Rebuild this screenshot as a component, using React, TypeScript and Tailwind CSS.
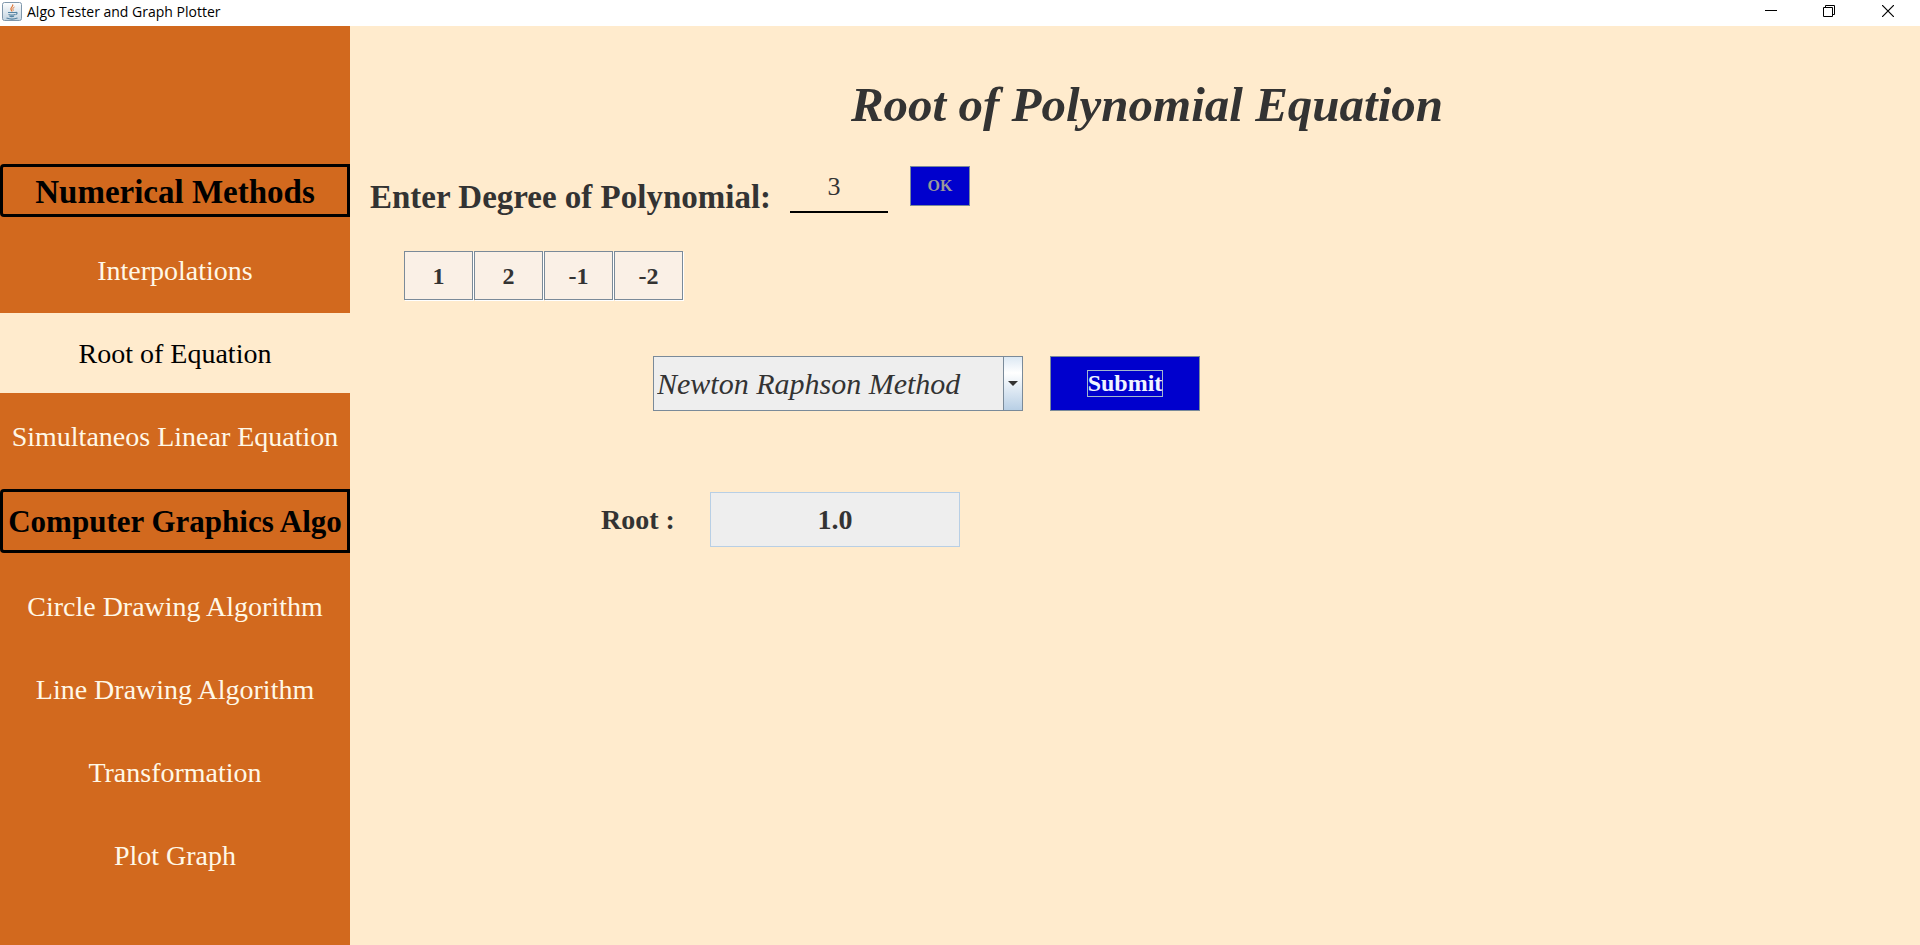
import { useState } from "react";

const NUMERICAL_NAV = ["Interpolations", "Root of Equation", "Simultaneos Linear Equation"];

const GRAPHICS_NAV = ["Circle Drawing Algorithm", "Line Drawing Algorithm", "Transformation", "Plot Graph"];

const COEFFICIENTS = ["1", "2", "-1", "-2"];

function JavaIcon() {
  return (
    <svg width="20" height="20" viewBox="0 0 20 20" aria-hidden="true">
      <defs>
        <linearGradient id="tile" x1="0" y1="0" x2="0" y2="1">
          <stop offset="0" stopColor="#fdfefe" />
          <stop offset="1" stopColor="#c3d3e0" />
        </linearGradient>
      </defs>
      <rect x="0.5" y="0.5" width="19" height="18" rx="2" fill="url(#tile)" stroke="#7f97ab" />
      <path d="M10.5 2.5c1.5 2-2.5 3-1.5 5 .4.9 1 1.2 1 2" fill="none" stroke="#e0793a" strokeWidth="1.3" />
      <path d="M12.5 5c-2 1-2 2-1 3.500" fill="none" stroke="#e0793a" />
      <path
        d="M6 10.5h7.5M6.500 12.500c2 .8 4.500 .8 6.500 0M7.500 14.200c1.500 .6 3 .6 4.500 0M4.500 16c3 1.200 8 1.200 11 0M13.500 10.500c2-.5 2.200 1.500 0 2.200"
        fill="none"
        stroke="#5382a1"
        strokeWidth="1.2"
      />
    </svg>
  );
}

function TitleBar() {
  return (
    <header className="flex h-[26px] shrink-0 items-start bg-white font-['Open_Sans',sans-serif] text-black">
      <div className="flex h-[23px] items-center gap-[5px] pl-0.5">
        <JavaIcon />
        <span className="text-[14px] leading-5">Algo Tester and Graph Plotter</span>
      </div>
      <div className="ml-auto flex h-[22px] pr-0.5">
        <button aria-label="Minimize" className="flex w-[58px] items-center justify-center">
          <svg width="12" height="12" viewBox="0 0 12 12" stroke="currentColor" fill="none">
            <path d="M0 5.5h12" />
          </svg>
        </button>
        <button aria-label="Restore" className="flex w-[58px] items-center justify-center">
          <svg width="12" height="12" viewBox="0 0 12 12" stroke="currentColor" fill="none">
            <path d="M0.5 2.5h9v9h-9zM2.5 2.5v-2h9v9h-2" />
          </svg>
        </button>
        <button aria-label="Close" className="flex w-[60px] items-center justify-center">
          <svg width="12" height="12" viewBox="0 0 12 12" stroke="currentColor" fill="none">
            <path d="M0 0l12 12M12 0L0 12" strokeWidth="1.2" />
          </svg>
        </button>
      </div>
    </header>
  );
}

type NavListProps = { items: string[]; active: string; onSelect: (label: string) => void };

function NavList({ items, active, onSelect }: NavListProps) {
  return (
    <ul className="flex flex-col gap-[3px]">
      {items.map((label) => (
        <li key={label}>
          <button
            onClick={() => onSelect(label)}
            className={
              "h-20 w-full pt-0.5 text-center text-[28px] leading-8 whitespace-nowrap " +
              (label === active ? "bg-[#ffebcd] text-black" : "text-[#fff8e7]")
            }
          >
            {label}
          </button>
        </li>
      ))}
    </ul>
  );
}

export default function App() {
  const [active, setActive] = useState("Root of Equation");

  return (
    <div className="flex min-h-screen flex-col bg-[#ffebcd] font-['Liberation_Serif',serif] text-[#333333]">
      <TitleBar />
      <div className="flex grow">
        <nav className="w-[350px] shrink-0 bg-[#d2691e] pt-[138px]">
          <h2 className="mb-[13px] flex h-[53px] items-center justify-center rounded-l-[4px] border-[3px] border-black pt-0.5 text-[33px] leading-8 font-bold whitespace-nowrap text-black">
            Numerical Methods
          </h2>
          <NavList items={NUMERICAL_NAV} active={active} onSelect={setActive} />
          <h2 className="my-[13px] flex h-16 items-center justify-center rounded-l-[4px] border-[3px] border-black pt-0.5 text-[31px] leading-8 font-bold whitespace-nowrap text-black">
            Computer Graphics Algo
          </h2>
          <NavList items={GRAPHICS_NAV} active={active} onSelect={setActive} />
        </nav>

        <main className="flex grow flex-col items-start">
          <h1 className="mt-[51px] w-full pl-6 text-center text-[49px] leading-[56px] font-bold italic">
            Root of Polynomial Equation
          </h1>

          <div className="mt-[33px] ml-5 flex items-start">
            <label htmlFor="degree" className="mt-[13px] w-[420px] text-[33px] leading-9 font-bold whitespace-nowrap">
              Enter Degree of Polynomial:
            </label>
            <input
              id="degree"
              defaultValue="3"
              className="h-[47px] w-[98px] border-b-2 border-black bg-transparent pr-[10px] pb-1 text-center text-[26px] outline-none"
            />
            <button disabled className="ml-[22px] h-10 w-[60px] border border-[#7a8a99] bg-[#0000cd] text-[16px] font-bold text-[#999999]">
              OK
            </button>
          </div>

          <div className="mt-9 ml-[54px] flex gap-px">
            {COEFFICIENTS.map((value, i) => (
              <input
                key={i}
                aria-label={"Coefficient " + (i + 1)}
                defaultValue={value}
                className="h-[49px] w-[69px] border border-[#7a8a99] bg-[#faf0e6] pt-0.5 text-center text-[24px] font-bold shadow-[1px_1px_0_#ffffff] outline-none"
              />
            ))}
          </div>

          <div className="mt-14 ml-[303px] flex items-start gap-[27px]">
            <div className="relative">
              <select
                aria-label="Method"
                className="h-[55px] w-[370px] appearance-none border border-[#7a8a99] bg-[#eeeeee] pr-6 pl-[3px] text-[30px] italic outline-none"
              >
                <option>Newton Raphson Method</option>
                <option>Bisection Method</option>
              </select>
              <span className="pointer-events-none absolute inset-y-px right-px flex w-[19px] items-center justify-center border-l border-[#7a8a99] bg-linear-to-b from-[#dce8f3] via-white via-30% to-[#b8cfe5]">
                <svg width="10" height="5" viewBox="0 0 10 5" fill="#333333">
                  <path d="M0 0h10L5 5z" />
                </svg>
              </span>
            </div>
            <button className="flex h-[55px] w-[150px] items-center justify-center border border-[#7a8a99] bg-[#0000cd] text-[#f0f4ff]">
              <span className="border border-[#a3b8cc] text-[24px] leading-[25px] font-bold">Submit</span>
            </button>
          </div>

          <div className="mt-[81px] ml-[251px] flex items-center">
            <label htmlFor="root" className="w-[109px] text-[28px] leading-8 font-bold whitespace-nowrap">
              Root :
            </label>
            <input
              id="root"
              readOnly
              defaultValue="1.0"
              className="h-[55px] w-[250px] border border-[#b8cfe5] bg-[#eeeeee] text-center text-[28px] font-bold outline-none"
            />
          </div>
        </main>
      </div>
    </div>
  );
}
